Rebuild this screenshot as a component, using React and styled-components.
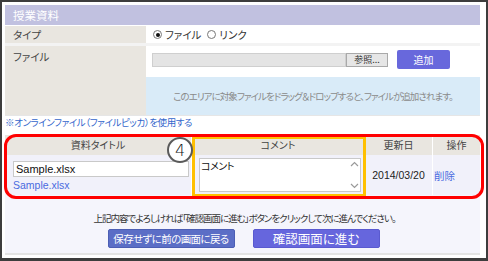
import React from 'react';
import styled, { createGlobalStyle } from 'styled-components';

const Global = createGlobalStyle`
  html, body { margin: 0; padding: 0; background: #fff; }
  body {
    font-family: "Noto Sans CJK JP", "Liberation Sans", sans-serif;
    font-feature-settings: "palt";
    color: #333;
  }
  * { box-sizing: border-box; }
`;

const Frame = styled.div`
  width: 488px;
  height: 261px;
  border: 2px solid #3d3d3d;
  border-bottom-width: 3px;
  padding: 3px 6px 3px 3px;
  background: #fff;
  display: flex;
  flex-direction: column;
`;

const SectionHead = styled.div`
  height: 20px;
  background: #c1c1e0;
  color: #fff;
  font-size: 11.5px;
  line-height: 20px;
  padding-left: 8px;
  margin-bottom: 1px;
`;

const FormRow = styled.div`
  display: grid;
  grid-template-columns: 141px 1fr;
  height: ${p => p.$h}px;
  border-bottom: 3px solid ${p => p.$sep || '#f3f3f3'};
`;

const Label = styled.div`
  background: #e9e6e0;
  font-size: 10.5px;
  color: #444;
  padding: ${p => p.$top ? '4px' : '0'} 0 0 8px;
  line-height: ${p => p.$top ? '14px' : '17px'};
`;

const Value = styled.div`
  display: flex;
  flex-direction: ${p => p.$col ? 'column' : 'row'};
  align-items: ${p => p.$col ? 'stretch' : 'center'};
  padding: ${p => p.$col ? '4px 0 0 0' : '0 0 0 7px'};
  font-size: 10.5px;
  gap: 2px;
`;

const Radio = styled.span`
  width: 9px;
  height: 9px;
  border-radius: 50%;
  border: 1px solid #777;
  background: #fff;
  display: inline-flex;
  align-items: center;
  justify-content: center;
  margin-right: 1px;
  &::after {
    content: '';
    width: 4px;
    height: 4px;
    border-radius: 50%;
    background: ${p => p.$on ? '#111' : 'transparent'};
  }
`;

const RadioText = styled.span`
  margin-right: 4px;
  color: #333;
`;

const Controls = styled.div`
  display: flex;
  align-items: center;
  height: 19px;
  margin-left: 6px;
`;

const FileField = styled.div`
  width: 194px;
  height: 14px;
  background: #e4e4e4;
  border: 1px solid #cfcfcf;
`;

const BrowseBtn = styled.div`
  width: 42px;
  height: 14px;
  background: #e6e6e6;
  border: 1px solid #a9a9a9;
  font-size: 9px;
  line-height: 12px;
  text-align: center;
  color: #333;
`;

const AddBtn = styled.div`
  margin-left: 9px;
  width: 53px;
  height: 19px;
  background: #6868dc;
  border-radius: 2px;
  color: #fff;
  font-size: 10px;
  line-height: 19px;
  text-align: center;
`;

const DropZone = styled.div`
  margin-top: 6px;
  height: 38px;
  background: #d9ebf8;
  color: #8a8a8a;
  font-size: 9.5px;
  letter-spacing: -0.95px;
  white-space: nowrap;
  display: flex;
  align-items: center;
  justify-content: center;
`;

const LinkLine = styled.div`
  height: 19px;
  font-size: 9.5px;
  letter-spacing: -0.4px;
  line-height: 13px;
  color: #3366cc;
  padding-left: 0;
`;

const TableWrap = styled.div`
  position: relative;
  height: 60px;
`;

const Grid = styled.div`
  display: grid;
  grid-template-columns: 186px 172px 67px 47px;
  grid-template-rows: 20px 40px;
  column-gap: 1px;
  background: #fff;
  height: 60px;
`;

const Th = styled.div`
  background: #e9e6e0;
  font-size: 10px;
  color: #444;
  text-align: center;
  line-height: 20px;
`;

const Td = styled.div`
  background: #f1f1fa;
  display: flex;
  flex-direction: column;
  justify-content: ${p => p.$top ? 'flex-start' : 'center'};
  align-items: ${p => p.$center ? 'center' : 'flex-start'};
  padding: ${p => p.$pad || '0'};
  font-size: 10.5px;
`;

const TextInput = styled.div`
  width: 176px;
  height: 16px;
  background: #fff;
  border: 1px solid #c9c9c9;
  font-family: "Liberation Sans", Arial, sans-serif;
  font-size: 11px;
  line-height: 14px;
  padding-left: 2px;
  color: #111;
`;

const FileLink = styled.span`
  margin-top: 1px;
  font-family: "Liberation Sans", Arial, sans-serif;
  font-size: 10.5px;
  line-height: 14px;
  color: #4a6be0;
`;

const TextArea = styled.div`
  width: 162px;
  height: 34px;
  background: #fff;
  border: 1px solid #c9c9c9;
  display: flex;
  font-size: 10px;
  color: #111;
`;

const TextBody = styled.div`
  flex: 1;
  padding: 1px 0 0 1px;
  line-height: 12px;
  letter-spacing: -0.5px;
`;

const ScrollGutter = styled.div`
  width: 12px;
  display: flex;
  flex-direction: column;
  justify-content: space-between;
  align-items: center;
  padding: 2px 0;
  color: #999;
`;

const DateText = styled.span`
  font-family: "Liberation Sans", Arial, sans-serif;
  font-size: 10.5px;
  color: #222;
`;

const OpLink = styled.span`
  color: #4a6be0;
  font-size: 10.5px;
`;

const RedMark = styled.div`
  position: absolute;
  top: -1px;
  left: -1px;
  right: -4px;
  bottom: -4px;
  border: 3px solid #ff0000;
  border-radius: 12px;
  pointer-events: none;
`;

const OrangeMark = styled.div`
  position: absolute;
  top: 1px;
  left: 187px;
  width: 174px;
  height: 61px;
  border: 3px solid #ffc000;
  pointer-events: none;
`;

const Badge = styled.div`
  position: absolute;
  left: 162px;
  top: 2px;
  width: 26px;
  height: 26px;
  border-radius: 50%;
  border: 2px solid #5a5a5a;
  background: #fff;
  display: flex;
  align-items: center;
  justify-content: center;
  font-family: "DejaVu Sans", "Liberation Sans", sans-serif;
  font-weight: 200;
  font-size: 16px;
  color: #111;
`;

const Footer = styled.div`
  flex: 1;
  background: #f5f5fc;
  border-bottom: 2px solid #e4e4e4;
  display: flex;
  flex-direction: column;
  align-items: center;
  padding-top: 17px;
`;

const Note = styled.div`
  font-size: 9.5px;
  letter-spacing: -1px;
  line-height: 12px;
  color: #333;
  margin-left: 4px;
  white-space: nowrap;
`;

const ButtonRow = styled.div`
  display: flex;
  gap: 18px;
  margin-top: 5px;
  margin-left: 2px;
`;

const ActionBtn = styled.div`
  width: 127px;
  height: 19px;
  border-radius: 2px;
  background: ${p => p.$primary ? '#6666dd' : '#5b6ec6'};
  border: 1px solid ${p => p.$primary ? '#5a5ad0' : '#4c5eb4'};
  color: #fff;
  font-size: ${p => p.$primary ? '12.5px' : '10.5px'};
  letter-spacing: ${p => p.$primary ? '0' : '-0.6px'};
  line-height: 17px;
  text-align: center;
`;

const Chevron = ({ up }) => (
  <svg width="9" height="6" viewBox="0 0 9 6">
    <path d={up ? 'M1 5 L4.5 1.5 L8 5' : 'M1 1 L4.5 4.5 L8 1'} fill="none" stroke="#9a9a9a" strokeWidth="1.2" />
  </svg>
);

export default function App() {
  return (
    <>
      <Global />
      <Frame>
        <SectionHead>授業資料</SectionHead>
        <FormRow $h={20}>
          <Label>タイプ</Label>
          <Value>
            <Radio $on />
            <RadioText>ファイル</RadioText>
            <Radio />
            <RadioText>リンク</RadioText>
          </Value>
        </FormRow>
        <FormRow $h={70} $sep="#e6e6e6">
          <Label $top>ファイル</Label>
          <Value $col>
            <Controls>
              <FileField />
              <BrowseBtn>参照...</BrowseBtn>
              <AddBtn>追加</AddBtn>
            </Controls>
            <DropZone>このエリアに対象ファイルをドラッグ＆ドロップすると、ファイルが追加されます。</DropZone>
          </Value>
        </FormRow>
        <LinkLine>※オンラインファイル（ファイルピッカ）を使用する</LinkLine>
        <TableWrap>
          <Grid>
            <Th>資料タイトル</Th>
            <Th>コメント</Th>
            <Th>更新日</Th>
            <Th>操作</Th>
            <Td $top $pad="6px 0 0 8px">
              <TextInput>Sample.xlsx</TextInput>
              <FileLink>Sample.xlsx</FileLink>
            </Td>
            <Td $top $pad="3px 0 0 7px">
              <TextArea>
                <TextBody>コメント</TextBody>
                <ScrollGutter>
                  <Chevron up />
                  <Chevron />
                </ScrollGutter>
              </TextArea>
            </Td>
            <Td $center>
              <DateText>2014/03/20</DateText>
            </Td>
            <Td $pad="0 0 0 1px">
              <OpLink>削除</OpLink>
            </Td>
          </Grid>
          <OrangeMark />
          <RedMark />
          <Badge>4</Badge>
        </TableWrap>
        <Footer>
          <Note>上記内容でよろしければ「確認画面に進む」ボタンをクリックして次に進んでください。</Note>
          <ButtonRow>
            <ActionBtn>保存せずに前の画面に戻る</ActionBtn>
            <ActionBtn $primary>確認画面に進む</ActionBtn>
          </ButtonRow>
        </Footer>
      </Frame>
    </>
  );
}
